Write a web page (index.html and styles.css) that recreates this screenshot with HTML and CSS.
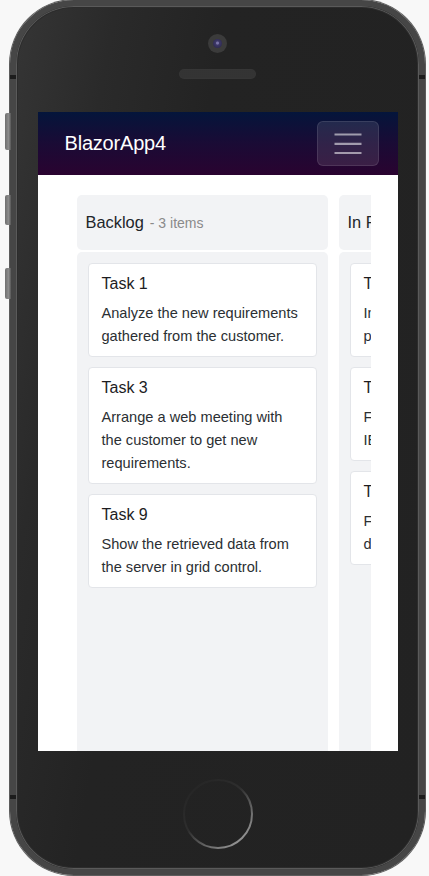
FILE: index.html
```html
<!DOCTYPE html>
<html lang="en">
<head>
<meta charset="utf-8">
<title>BlazorApp4</title>
<link rel="stylesheet" href="styles.css">
</head>
<body>
<div class="device">
  <div class="side-btn btn-a"></div>
  <div class="side-btn btn-b"></div>
  <div class="side-btn btn-c"></div>
  <div class="notch notch-lt"></div>
  <div class="notch notch-rt"></div>
  <div class="notch notch-lb"></div>
  <div class="notch notch-rb"></div>
  <div class="phone">
    <div class="camera"><div class="lens"></div></div>
    <div class="speaker"></div>
    <div class="screen">
      <header class="navbar">
        <span class="brand">BlazorApp4</span>
        <button class="toggler" type="button" aria-label="Menu">
          <svg width="28" height="22" viewBox="0 0 28 22"><path d="M0.5 1.5h27M0.5 10.8h27M0.5 20h27" stroke="rgba(255,255,255,0.55)" stroke-width="2.2" fill="none"/></svg>
        </button>
      </header>
      <main class="content">
        <div class="kanban">
          <section class="column">
            <div class="col-header"><span class="col-title">Backlog</span><span class="col-count">- 3 items</span></div>
            <div class="col-body">
              <div class="card"><div class="card-title">Task 1</div><div class="card-text">Analyze the new requirements gathered from the customer.</div></div>
              <div class="card"><div class="card-title">Task 3</div><div class="card-text">Arrange a web meeting with the customer to get new requirements.</div></div>
              <div class="card"><div class="card-title">Task 9</div><div class="card-text">Show the retrieved data from the server in grid control.</div></div>
            </div>
          </section>
          <section class="column">
            <div class="col-header"><span class="col-title">In Progress</span><span class="col-count">- 3 items</span></div>
            <div class="col-body">
              <div class="card"><div class="card-title">Task 2</div><div class="card-text">Improve application performance.</div></div>
              <div class="card"><div class="card-title">Task 4</div><div class="card-text">Fix the issues reported in the IE browser.</div></div>
              <div class="card"><div class="card-title">Task 6</div><div class="card-text">Fixed the login issue reported during testing.</div></div>
            </div>
          </section>
        </div>
      </main>
    </div>
    <div class="home">
      <svg width="72" height="72" viewBox="0 0 72 72">
        <defs>
          <linearGradient id="hg" x1="0.15" y1="0.1" x2="0.85" y2="0.95">
            <stop offset="0" stop-color="#262626"/>
            <stop offset="0.4" stop-color="#2e2e2e"/>
            <stop offset="1" stop-color="#9a9a9a"/>
          </linearGradient>
        </defs>
        <circle cx="36" cy="36" r="34" fill="none" stroke="url(#hg)" stroke-width="2"/>
      </svg>
    </div>
  </div>
</div>
</body>
</html>
```

FILE: styles.css
```css
* { box-sizing: border-box; }

html, body {
  margin: 0;
  padding: 0;
  background: #f8f8f8;
  font-family: "Liberation Sans", Arial, sans-serif;
}

.device {
  position: relative;
  width: 429px;
  height: 876px;
}

.phone {
  margin-left: 10px;
  width: 415px;
  height: 875px;
  border: 6px solid #464646;
  border-radius: 64px;
  background: linear-gradient(100deg, #353535 0%, #2a2a2a 18%, #232323 38%, #222 100%);
  box-shadow: 0 0 0 1px #5c5c5c, inset 0 0 0 1px #5a5a5a, inset 0 0 0 2px #2c2c2c;
  display: flex;
  flex-direction: column;
  align-items: center;
}

.side-btn {
  position: absolute;
  left: 5px;
  width: 6px;
  background: linear-gradient(90deg, #6e6e6e, #8c8c8c 60%, #555);
  border-radius: 2px 0 0 2px;
}
.btn-a { top: 113px; height: 37px; }
.btn-b { top: 195px; height: 30px; }
.btn-c { top: 268px; height: 31px; }

.notch {
  position: absolute;
  width: 6px;
  height: 4px;
  background: #1c1c1c;
}
.notch-lt { left: 10px; top: 75px; }
.notch-rt { left: 419px; top: 75px; }
.notch-lb { left: 10px; top: 795px; }
.notch-rb { left: 419px; top: 795px; }

.camera {
  margin-top: 28px;
  width: 19px;
  height: 19px;
  border-radius: 50%;
  background: #3b3b3b;
  display: flex;
  align-items: center;
  justify-content: center;
}
.lens {
  width: 9px;
  height: 9px;
  border-radius: 50%;
  background: radial-gradient(circle at 50% 45%, #7a74a8 0 1px, #3d3868 2px, #262244 100%);
}

.speaker {
  margin-top: 17px;
  width: 75px;
  height: 8px;
  border-radius: 4px;
  background-color: #4e4e4e;
  background-image: radial-gradient(circle, #333 0.7px, transparent 1px);
  background-size: 2px 2px;
  box-shadow: 0 0 0 1px #363636;
}

.screen {
  margin-top: 34px;
  width: 360px;
  height: 639px;
  background: #fff;
  overflow: hidden;
  display: flex;
  flex-direction: column;
}

.navbar {
  height: 63px;
  flex-shrink: 0;
  background: linear-gradient(180deg, #04153b 0%, #1a0b35 50%, #2a0330 100%);
  display: flex;
  align-items: center;
  justify-content: space-between;
  padding: 0 19px 0 27px;
}
.brand {
  color: #fff;
  font-size: 20px;
  letter-spacing: -0.2px;
}
.toggler {
  width: 62px;
  height: 45px;
  border: 1px solid rgba(255, 255, 255, 0.1);
  background: rgba(255, 255, 255, 0.1);
  border-radius: 6px;
  padding: 0;
  display: flex;
  align-items: center;
  justify-content: center;
}

.content {
  flex: 1;
  padding: 20px 27px 0 39px;
}
.kanban {
  display: flex;
  gap: 11px;
  overflow: hidden;
  height: 560px;
}
.column {
  flex: 0 0 251px;
  display: flex;
  flex-direction: column;
  gap: 2px;
}
.col-header {
  height: 55px;
  background: #f2f3f5;
  border-radius: 5px;
  display: flex;
  align-items: center;
  padding: 0 9px;
  white-space: nowrap;
}
.col-title {
  font-size: 16.4px;
  color: #212529;
}
.col-count {
  font-size: 14px;
  color: #8a8a8a;
  margin-left: 6px;
}
.col-body {
  flex: 1;
  background: #f2f3f5;
  border-radius: 5px 5px 0 0;
  padding: 11px;
  display: flex;
  flex-direction: column;
  gap: 10px;
}
.card {
  background: #fff;
  border: 1px solid #e3e5e9;
  border-radius: 4px;
  padding: 8px 13px 8px;
}
.card-title {
  font-size: 16px;
  line-height: 24px;
  color: #1d1d1f;
  margin-bottom: 6px;
}
.card-text {
  font-size: 14.6px;
  line-height: 23px;
  color: #2b2f33;
}

.home {
  margin-top: 27px;
  width: 72px;
  height: 72px;
}
.home svg { display: block; }
```
